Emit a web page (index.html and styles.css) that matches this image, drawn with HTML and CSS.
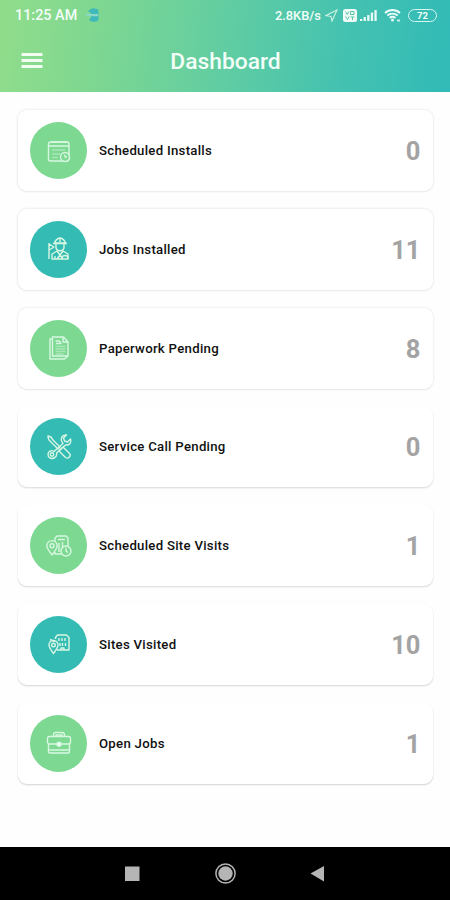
FILE: index.html
```
<!DOCTYPE html>
<html lang="en">
<head>
<meta charset="utf-8">
<title>Dashboard</title>
<link rel="stylesheet" href="styles.css">
</head>
<body>
<header class="header">
  <div class="status">
    <span class="time">11:25 AM</span>
    <svg class="notice" width="15" height="14" viewBox="0 0 15 14"><path d="M3 3.200A7 7 0 0 1 13.500 2v10A7 7 0 0 1 4 12l2-3V5z" fill="#3fb9b9"/><path d="M0 5.500l4 .6h9v2.200H5L2 8z" fill="#8bd8cb"/></svg>
    <span class="speed">2.8KB/s</span>
    <svg class="locate" width="13" height="13" viewBox="0 0 13 13"><path d="M12 1L1 6.500l5 1 1 4.500z" class="thin"/></svg>
    <svg class="volte" width="14" height="13" viewBox="0 0 14 13"><rect width="14" height="13" rx="2.500" fill="#eefbf6"/><path d="M2.500 2.500l1.700 3 1.700-3M7.500 2.500h3.500v3H7.500zM2.500 7.500l2 3 1.500-3M7.500 8h4M9.500 8v3" fill="none" stroke="#58c6a9"/></svg>
    <svg class="signal" width="17" height="13" viewBox="0 0 17 13"><path d="M0 10h2.300v2H0zM3.600 8h2.300v4H3.600zM7.200 6h2.300v6H7.200zM10.800 3.500h2.300V12h-2.300zM14.400 1h2.300v11h-2.300z" fill="#e8faf5"/></svg>
    <svg class="wifi" width="18" height="14" viewBox="0 0 18 14"><path d="M1 5a11 11 0 0 1 15 0M3.300 7.500a8 8 0 0 1 10.400 0M5.600 10a4.500 4.500 0 0 1 5.800 0" fill="none" stroke="#effcf9" stroke-width="1.900"/><circle cx="8.500" cy="12" r="1.500" fill="#effcf9"/><path d="M13 12.500h3" stroke="#c9efeb" stroke-width="2"/></svg>
    <span class="battery">72</span>
  </div>
  <div class="bar">
    <svg width="22" height="17" viewBox="0 0 22 17"><path d="M.5 2.500h21M.5 8.500h21M.5 14.500h21" stroke="#f1fdf0" stroke-width="2.800"/></svg>
    <h1>Dashboard</h1>
  </div>
</header>

<main class="list">
  <section class="card lift1">
    <div class="disc green"><svg class="icon" viewBox="0 0 26 26"><rect x="2.500" y="4" width="20.500" height="19" rx="2"/><path d="M2.500 8h20.500M5 4h16" /><path d="M6 3v2M10 3v2M15 3v2M19.500 3v2"/><path class="faint" d="M6 12h13M6 16h8M6 19.500h6"/><circle class="disc-fill" cx="19" cy="19" r="4.500"/><path d="M19 16.800V19h2"/></svg></div>
    <span class="label">Scheduled Installs</span><span class="count">0</span>
  </section>
  <section class="card lift1">
    <div class="disc teal"><svg class="icon" viewBox="0 0 26 26"><path d="M8.500 7c1-3 2.500-4.500 5.500-5 3 .5 4.500 2 5.500 5zM7 7.500h14M10 8v3c0 5 8 5 8 0V8M14 2v4"/><path d="M3 7v16M3 8l5 3-5 3M6 23v-5l5-3 3 4 3-4 5 3v5zM9 23v-3M14 19l-3 4M14 19l3 4"/><path d="M16 22.500a3 3 0 0 1 6 0"/></svg></div>
    <span class="label">Jobs Installed</span><span class="count">11</span>
  </section>
  <section class="card lift2">
    <div class="disc green"><svg class="icon" viewBox="0 0 26 26"><path d="M6.500 2h11l4.500 5v14H6.500zM17 2v5h5M6.500 4H4V24H18.500l3.500-3"/><path d="M9.500 6h4l1.500 2.500h-5"/><path class="faint" d="M9.500 11.500h10M9.500 14h10M9.500 16.500h10M9.500 19h8"/></svg></div>
    <span class="label">Paperwork Pending</span><span class="count">8</span>
  </section>
  <section class="card lift3">
    <div class="disc teal"><svg class="icon" viewBox="0 0 26 26"><path d="M2 2l3 1 2 3 7 7-2 2-7-7-2-2-1-3zM15 15l2-2 6.500 6.500c2 2-1 6-4 4L13 17z"/><path d="M17 9.500l-9 8c-3-2-6 0-6 3s3 5 6 3.500 3-3.500 2.500-5l9-8c4 .5 6-2 5-6l-3 3-3-1-1-3 3-3c-3-.5-6 2-5 6z"/><circle cx="6" cy="20.500" r="1.700"/></svg></div>
    <span class="label">Service Call Pending</span><span class="count">0</span>
  </section>
  <section class="card lift4">
    <div class="disc green"><svg class="icon" viewBox="0 0 26 26"><path d="M9 8V5l2-2h9l2 2v8M9 19v2h7M12 6.500h7M13 10v9M16.500 9v5"/><path class="disc-fill" d="M6 22C3 18 .8 15.500 .8 12.800a5.200 5.200 0 0 1 10.400 0C11.200 15.500 9 18 6 22z"/><circle cx="6" cy="12.800" r="2"/><circle class="disc-fill" cx="20" cy="18" r="5"/><path d="M20 14.500V18l2 1.500"/></svg></div>
    <span class="label">Scheduled Site Visits</span><span class="count">1</span>
  </section>
  <section class="card lift5">
    <div class="disc teal"><svg class="icon" viewBox="0 0 26 26"><path d="M9.500 8V6.500L11.500 4H20.500l2.500 2.500V19H11M13 7v3M16 7v3M19 7v3M14 12v3M16.500 12v3M19.500 12v3M15 19v-2h3v2"/><path class="disc-fill" d="M7.500 22.500C5 19 3 16.500 3 14a4.500 4.500 0 0 1 9 0c0 2.500-2 5-4.500 8.500z"/><circle cx="7.500" cy="14" r="1.800"/><path d="M4 8.500l5 2"/></svg></div>
    <span class="label">Sites Visited</span><span class="count">10</span>
  </section>
  <section class="card lift6">
    <div class="disc green"><svg class="icon" viewBox="0 0 26 26"><rect x="1.500" y="6.500" width="23" height="7.500" rx="2"/><path d="M2.500 14v7.500q0 1.500 1.500 1.500h18q1.500 0 1.500-1.500V14M7.500 6.500V5q0-2.500 2.500-2.500h6q2.500 0 2.500 2.500v1.500M10 6.500V5h6v1.500M2.800 20h20.400"/><circle cx="13" cy="14.200" r="2" fill="#effff1"/></svg></div>
    <span class="label">Open Jobs</span><span class="count">1</span>
  </section>
</main>

<nav class="nav">
  <svg width="450" height="53" viewBox="0 0 450 53"><rect x="125" y="19.500" width="14.500" height="14.500" fill="#b5b5b5"/><circle cx="225.500" cy="26.500" r="9.600" fill="none" stroke="#b5b5b5" stroke-width="1.500"/><circle cx="225.500" cy="26.500" r="7.200" fill="#b5b5b5"/><path d="M310.500 26.500L324 19v15.500z" fill="#b5b5b5"/></svg>
</nav>
</body>
</html>
```
FILE: styles.css
```
* { box-sizing: border-box; }
body {
  margin: 0;
  width: 450px;
  height: 900px;
  display: flex;
  flex-direction: column;
  background: #fefefe;
  font-family: Roboto, "Liberation Sans", sans-serif;
  overflow: hidden;
}
svg { display: block; flex: none; }
.header {
  height: 92px;
  background: linear-gradient(97deg, #91dd8b 0%, #7ed791 22%, #61cda2 50%, #45c2b0 75%, #31bab7 100%);
  color: #f3fef8;
}
.status {
  height: 30px;
  padding-left: 15px;
  display: flex;
  align-items: center;
  font-weight: 500;
}
.time { width: 70px; font-size: 14.4px; white-space: nowrap; }
.speed { margin-left: 175px; width: 50px; font-size: 12.8px; white-space: nowrap; }
.thin { fill: none; stroke: #c8efe0; stroke-width: 1.2; }
.volte { margin-left: 5px; }
.signal { margin-left: 3px; }
.wifi { margin-left: 7px; }
.battery {
  width: 29px;
  height: 13px;
  margin-left: 6px;
  border: 1.5px solid #d5f5f1;
  border-radius: 7px;
  font-size: 9.5px;
  line-height: 11px;
  font-weight: 700;
  text-align: center;
}
.bar {
  height: 62px;
  display: grid;
  grid-template-columns: 22px 1fr 22px;
  align-items: center;
  padding: 0 20px 2px 21px;
}
h1 { margin: 3px 0 0; text-align: center; font-size: 22.8px; font-weight: 500; line-height: 30px; }
.list {
  flex: 1;
  padding: 18px 17px 0 18px;
  display: flex;
  flex-direction: column;
  gap: 17.75px;
}
.card {
  height: 81px;
  flex: none;
  display: flex;
  align-items: center;
  padding: 0 12.5px 0 12px;
  border-radius: 9px;
  background: #fff;
}
.lift1 { box-shadow: 0 0 2px 1px #eee, 0 1px 1px #e8e8e8; }
.lift2 { box-shadow: 0 0 2px 1px #f0f0f0, 0 1px 1px #ddd; }
.lift3 { box-shadow: 0 1px 2px #e4e4e4, 0 1px 1px #d8d8d8; }
.lift4 { box-shadow: 0 1px 2px #e4e4e4, 0 1px 1px #d8d8d8; }
.lift5 { box-shadow: 0 1px 2px #e2e2e2, 0 1px 1px #d4d4d4; }
.lift6 { box-shadow: 0 1px 2px #e0e0e0, 0 1px 1px #d4d4d4; }
.disc {
  width: 57px;
  height: 57px;
  flex: none;
  border-radius: 50%;
  display: grid;
  place-items: center;
}
.green { background: #7dd891; --disc: #7dd891; }
.teal { background: #33bbb4; --disc: #33bbb4; }
.icon { width: 26px; height: 26px; fill: none; stroke: #d8f7e2; stroke-width: 1.4; stroke-linejoin: round; }
.faint { opacity: .5; }
.disc-fill { fill: var(--disc); }
.label { margin: 0 0 0 12px; font-size: 13.2px; font-weight: 500; color: #111; letter-spacing: .28px; }
.count { margin: 1px 0 0 auto; font-size: 25.5px; font-weight: 700; line-height: 30px; color: #a3a3a3; }
.nav { height: 53px; flex: none; background: #000; }
```
